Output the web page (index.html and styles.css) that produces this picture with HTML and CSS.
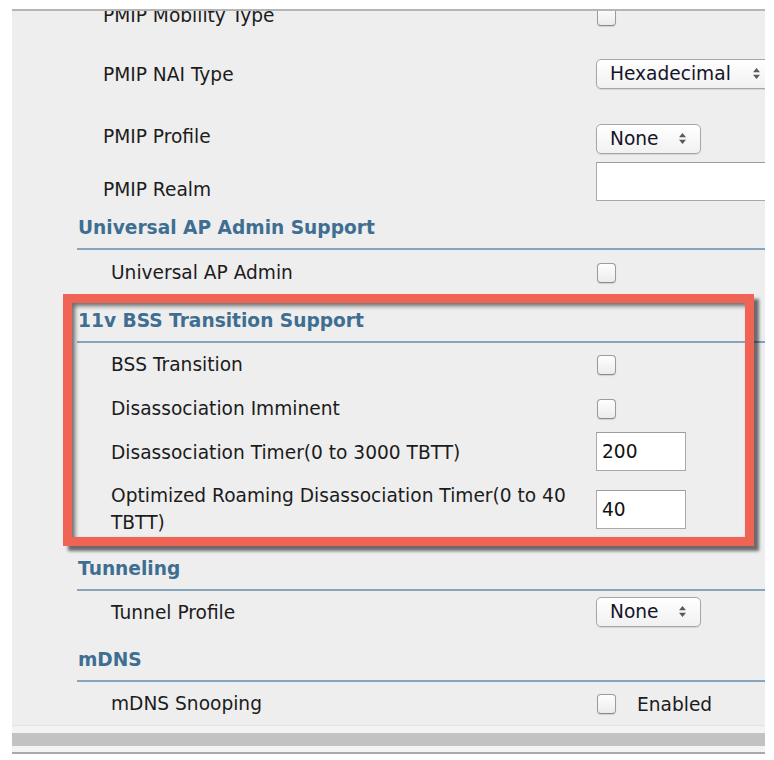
FILE: index.html
```html
<!DOCTYPE html>
<html lang="en">
<head>
<meta charset="utf-8">
<title>WLAN Advanced</title>
<link rel="stylesheet" href="styles.css">
</head>
<body>
<div class="page">
  <div class="panel">
    <div class="row pmip first">
      <div class="label">PMIP Mobility Type</div>
      <div class="control"><input type="checkbox" class="check"></div>
    </div>
    <div class="row pmip h62">
      <div class="label">PMIP NAI Type</div>
      <div class="control">
        <div class="select wide up5"><span>Hexadecimal</span>
          <svg class="arrows" width="7" height="11" viewBox="0 0 7 11"><path d="M3.5 0L7 4.2H0z M3.5 11L0 6.8h7z" fill="#5a5a5a"/></svg>
        </div>
      </div>
    </div>
    <div class="row pmip h63">
      <div class="label">PMIP Profile</div>
      <div class="control">
        <div class="select down2"><span>None</span>
          <svg class="arrows" width="7" height="11" viewBox="0 0 7 11"><path d="M3.5 0L7 4.2H0z M3.5 11L0 6.8h7z" fill="#5a5a5a"/></svg>
        </div>
      </div>
    </div>
    <div class="row pmip h42">
      <div class="label">PMIP Realm</div>
      <div class="control realm-cell"><input type="text" class="field realm"></div>
    </div>

    <div class="section-head tight">Universal AP Admin Support</div>
    <div class="row h46">
      <div class="label">Universal AP Admin</div>
      <div class="control"><input type="checkbox" class="check"></div>
    </div>

    <div class="section-head">11v BSS Transition Support</div>
    <div class="row">
      <div class="label">BSS Transition</div>
      <div class="control"><input type="checkbox" class="check"></div>
    </div>
    <div class="row">
      <div class="label">Disassociation Imminent</div>
      <div class="control"><input type="checkbox" class="check"></div>
    </div>
    <div class="row">
      <div class="label">Disassociation Timer(0 to 3000 TBTT)</div>
      <div class="control"><input type="text" class="field short up3" value="200"></div>
    </div>
    <div class="row auto">
      <div class="label">Optimized Roaming Disassociation Timer(0 to 40 TBTT)</div>
      <div class="control"><input type="text" class="field short" value="40"></div>
    </div>

    <div class="section-head">Tunneling</div>
    <div class="row">
      <div class="label">Tunnel Profile</div>
      <div class="control">
        <div class="select up3"><span>None</span>
          <svg class="arrows" width="7" height="11" viewBox="0 0 7 11"><path d="M3.5 0L7 4.2H0z M3.5 11L0 6.8h7z" fill="#5a5a5a"/></svg>
        </div>
      </div>
    </div>

    <div class="section-head">mDNS</div>
    <div class="row">
      <div class="label">mDNS Snooping</div>
      <div class="control inline"><input type="checkbox" class="check"><span class="opt">Enabled</span></div>
    </div>

    <div class="highlight" aria-hidden="true"></div>
  </div>
  <div class="stripe s1"></div>
  <div class="stripe s2"></div>
  <div class="stripe s3"></div>
  <div class="stripe s4"></div>
</div>
</body>
</html>
```

FILE: styles.css
```css
* { box-sizing: border-box; }

body {
  margin: 0;
  background: #ffffff;
  font-family: "DejaVu Sans", Verdana, sans-serif;
  font-size: 18.6px;
  color: #1c1c1c;
}

.page {
  margin-left: 12px;
  width: 753px;
  padding-top: 9px;
}

.panel {
  position: relative;
  height: 716px;
  overflow: hidden;
  background: #eeeeee;
  border-top: 2px solid #b5b5b5;
}

.row {
  display: grid;
  grid-template-columns: 584px 1fr;
  grid-template-rows: 100%;
  align-items: center;
  height: 44px;
}
.row.first { height: 60px; margin-top: -25px; }
.row.h62 { height: 62px; margin-top: -2px; }
.row.h63 { height: 63px; }
.row.h42 { height: 42px; }
.row.h46 { height: 46px; }
.row.auto { height: auto; grid-template-rows: auto; padding: 8px 0; }

.label {
  padding-left: 99px;
  padding-right: 10px;
  line-height: 26.6px;
}
.row.pmip .label { padding-left: 91px; }

.control {
  display: flex;
  align-items: center;
  min-width: 0;
}
.control.inline { gap: 21px; }
.control.realm-cell { align-self: start; }

.section-head {
  margin-left: 65px;
  padding: 11px 0 7px 1px;
  line-height: 27px;
  font-weight: bold;
  color: #3e6e91;
  border-bottom: 2px solid #86a4bb;
}
.section-head.tight { padding-top: 3px; }

.check {
  appearance: none;
  -webkit-appearance: none;
  width: 19px;
  height: 20px;
  margin: 0 0 0 1px;
  border: 1px solid #9b9b9b;
  border-bottom-color: #8a8a8a;
  border-radius: 4px;
  background: linear-gradient(#fefefe, #ececec);
  box-shadow: 0 1px 1px rgba(0, 0, 0, 0.12);
}

.select {
  display: flex;
  align-items: center;
  justify-content: space-between;
  flex: none;
  width: 105px;
  height: 30px;
  padding: 0 14px 0 13px;
  border: 1px solid #a6a6a6;
  border-radius: 5px;
  background: linear-gradient(#ffffff, #f1f1f1);
  box-shadow: 0 1px 1px rgba(0, 0, 0, 0.1);
  color: #141428;
}
.select.wide { width: 180px; padding-right: 15px; }
.arrows { display: block; flex: none; }

.up5 { margin-bottom: 3px; }
.up3 { margin-bottom: 3px; }
.down2 { margin-top: 2px; }

.field {
  flex: none;
  height: 39px;
  padding: 0 5px;
  border: 1px solid #a9a9a9;
  border-top-color: #9c9c9c;
  background: #ffffff;
  font-family: "DejaVu Sans", Verdana, sans-serif;
  font-size: 18.6px;
  color: #111;
  outline: none;
}
.field.short { width: 90px; }
.field.realm { width: 200px; margin-top: -7px; }

.opt { color: #1c1c1c; }

.highlight {
  position: absolute;
  left: 51px;
  top: 283px;
  width: 691px;
  height: 252px;
  border: 9px solid #ef6455;
  box-shadow: inset 3px 3px 4px rgba(0, 0, 0, 0.55), 5px 5px 3px rgba(0, 0, 0, 0.55);
  pointer-events: none;
}

.stripe { width: 753px; }
.stripe.s1 { height: 8px; background: #f3f3f3; border-top: 1px solid #e3e3e3; }
.stripe.s2 { height: 13px; background: #c2c2c2; }
.stripe.s3 { height: 6px; background: #f3f3f3; }
.stripe.s4 { height: 2px; background: #a9a9a9; }
```
